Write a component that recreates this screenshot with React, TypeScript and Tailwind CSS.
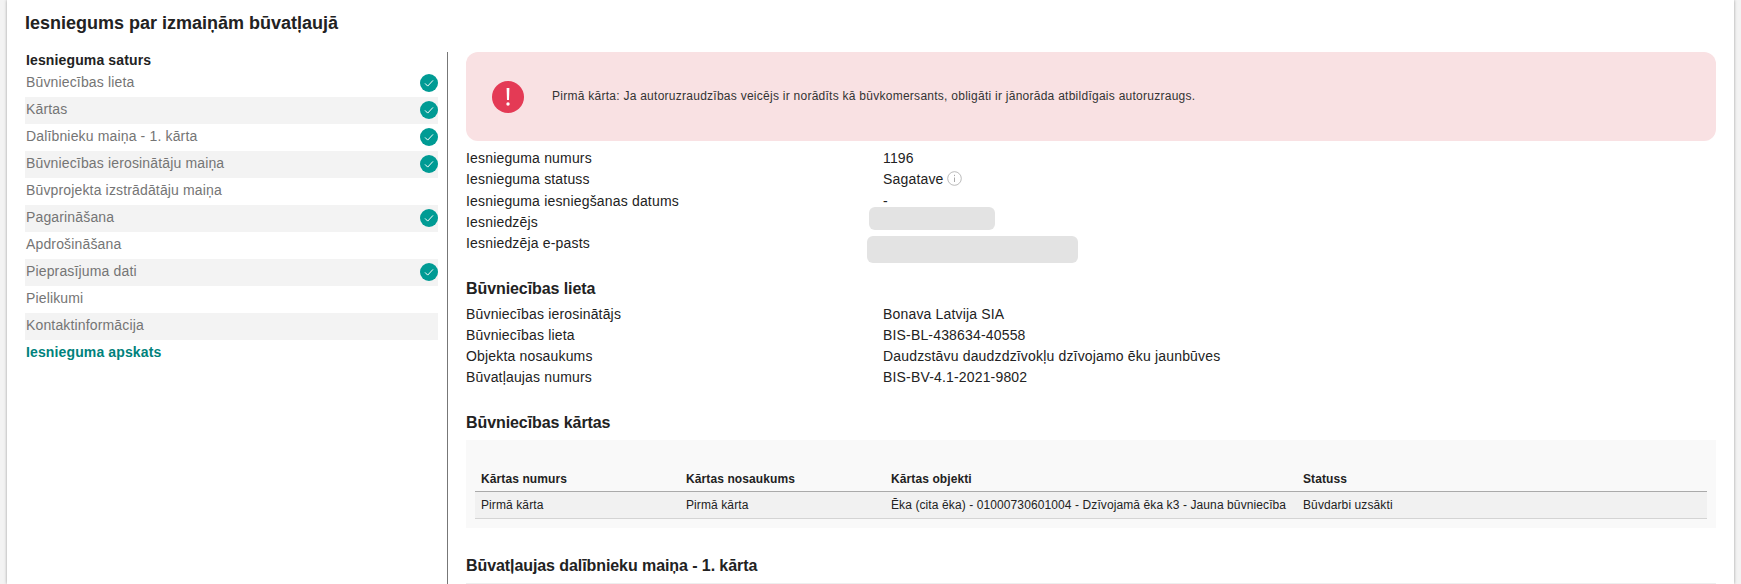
const sidebarItems = [
  { label: "Būvniecības lieta", done: true },
  { label: "Kārtas", done: true },
  { label: "Dalībnieku maiņa - 1. kārta", done: true },
  { label: "Būvniecības ierosinātāju maiņa", done: true },
  { label: "Būvprojekta izstrādātāju maiņa", done: false },
  { label: "Pagarināšana", done: true },
  { label: "Apdrošināšana", done: false },
  { label: "Pieprasījuma dati", done: true },
  { label: "Pielikumi", done: false },
  { label: "Kontaktinformācija", done: false },
];

function CheckBadge() {
  return (
    <svg width="18" height="18" viewBox="0 0 18 18" className="-mt-[1px] shrink-0">
      <circle cx="9" cy="9" r="9" fill="#009B94" />
      <path d="M5 9.4l2.7 2.7L13 6.4" fill="none" stroke="#fff" strokeWidth="1" />
    </svg>
  );
}

function InfoRow({ label, value, tight }: { label: string; value: string; tight?: boolean }) {
  return (
    <div className={`flex items-center text-sm tracking-[0.17px] text-[#222] ${tight ? "h-[21px]" : "h-[21.5px]"}`}>
      <div className="w-[417px] shrink-0">{label}</div>
      <div>{value}</div>
    </div>
  );
}

export default function App() {
  return (
    <div className="h-[584px] overflow-hidden bg-[#f3f3f3] font-['Liberation_Sans',Arial,sans-serif]">
      <div className="mx-[7px] h-[584px] bg-white px-[18px] shadow-[0_0_3px_rgba(0,0,0,0.35)]">
        <h1 className="flex h-[52px] items-center pb-[6px] text-lg font-bold text-[#222]">
          Iesniegums par izmaiņām būvatļaujā
        </h1>

        <div className="flex">
          {/* Sidebar */}
          <div className="h-[532px] w-[423px] shrink-0 border-r border-[#777] pr-[9px]">
            <div className="flex h-[18px] items-center pb-[2px] pl-px text-sm font-bold tracking-[0.13px] text-[#222]">
              Iesnieguma saturs
            </div>
            <div>
              {sidebarItems.map((item, i) => (
                <div
                  key={item.label}
                  className={`flex h-[27px] items-center justify-between pl-px text-sm tracking-[0.15px] text-[#757575] ${
                    i % 2 === 1 ? "bg-[#f3f3f3]" : ""
                  }`}
                >
                  <span className="-mt-[4px]">{item.label}</span>
                  {item.done && <CheckBadge />}
                </div>
              ))}
              <div className="flex h-[27px] items-center pb-[4px] pl-px text-sm font-bold tracking-[0.13px] text-[#00827c]">
                Iesnieguma apskats
              </div>
            </div>
          </div>

          {/* Main column */}
          <div className="ml-[18px] min-w-0 flex-1">
            <div className="flex h-[89px] items-center rounded-xl bg-[#f9e1e3] pl-[26px]">
              <svg width="32" height="32" viewBox="0 0 32 32" className="shrink-0">
                <circle cx="16" cy="16" r="16" fill="#e43a55" />
                <path d="M14.6 7h2.8l-.4 12h-2z" fill="#fff" />
                <circle cx="16" cy="23" r="1.7" fill="#fff" />
              </svg>
              <div className="-mt-[2px] ml-[28px] text-xs tracking-[0.26px] text-[#333]">
                Pirmā kārta: Ja autoruzraudzības veicējs ir norādīts kā būvkomersants, obligāti ir jānorāda atbildīgais autoruzraugs.
              </div>
            </div>

            <div className="mt-[6px]">
              <InfoRow label="Iesnieguma numurs" value="1196" />
              <div className="flex h-[21.5px] items-center text-sm tracking-[0.17px] text-[#222]">
                <div className="w-[417px] shrink-0">Iesnieguma statuss</div>
                <div className="flex items-center gap-[3px]">
                  Sagatave
                  <svg width="15" height="15" viewBox="0 0 15 15" className="-mt-[2px]">
                    <circle cx="7.5" cy="7.5" r="6.8" fill="none" stroke="#aaa" strokeWidth="0.8" />
                    <path d="M7.5 6.5v4.5M7.5 3.8v1.3" stroke="#aaa" strokeWidth="1" />
                  </svg>
                </div>
              </div>
              <InfoRow label="Iesnieguma iesniegšanas datums" value="-" />
              <div className="relative">
                <InfoRow label="Iesniedzējs" value="" tight />
                <div className="absolute left-[403px] top-[-4.5px] h-[23px] w-[126px] rounded-md bg-[#e3e3e3]" />
              </div>
              <div className="relative">
                <InfoRow label="Iesniedzēja e-pasts" value="" tight />
                <div className="absolute left-[401px] top-[3.5px] h-[27px] w-[211px] rounded-md bg-[#e3e3e3]" />
              </div>
            </div>

            <h2 className="mb-[4px] mt-[25px] flex h-[21px] items-center text-base font-bold tracking-[-0.08px] text-[#222]">
              Būvniecības lieta
            </h2>
            <InfoRow label="Būvniecības ierosinātājs" value="Bonava Latvija SIA" tight />
            <InfoRow label="Būvniecības lieta" value="BIS-BL-438634-40558" tight />
            <InfoRow label="Objekta nosaukums" value="Daudzstāvu daudzdzīvokļu dzīvojamo ēku jaunbūves" tight />
            <InfoRow label="Būvatļaujas numurs" value="BIS-BV-4.1-2021-9802" tight />

            <h2 className="mb-[6px] mt-[25px] flex h-[21px] items-center text-base font-bold tracking-[-0.08px] text-[#222]">
              Būvniecības kārtas
            </h2>
            <div className="h-[88px] bg-[#f9f9f9] px-[9px] pt-[28px]">
              <table className="w-full table-fixed border-collapse text-xs tracking-[0.1px] text-[#222]">
                <thead>
                  <tr className="h-[24px] border-b border-[#aaa] text-left font-bold">
                    <th className="w-[205px] px-[6px]">Kārtas numurs</th>
                    <th className="w-[205px] px-[6px]">Kārtas nosaukums</th>
                    <th className="w-[412px] px-[6px]">Kārtas objekti</th>
                    <th className="px-[6px]">Statuss</th>
                  </tr>
                </thead>
                <tbody>
                  <tr className="h-[27px] border-b border-[#d4d4d4] bg-[#f1f1f1]">
                    <td className="px-[6px]">Pirmā kārta</td>
                    <td className="px-[6px]">Pirmā kārta</td>
                    <td className="whitespace-nowrap px-[6px]">
                      Ēka (cita ēka) - 01000730601004 - Dzīvojamā ēka k3 - Jauna būvniecība
                    </td>
                    <td className="px-[6px]">Būvdarbi uzsākti</td>
                  </tr>
                </tbody>
              </table>
            </div>

            <h2 className="mt-[28px] flex h-[21px] items-center text-base font-bold tracking-[-0.08px] text-[#222]">
              Būvatļaujas dalībnieku maiņa - 1. kārta
            </h2>
            <div className="mt-[6px] border-t border-[#eee]" />
          </div>
        </div>
      </div>
    </div>
  );
}
